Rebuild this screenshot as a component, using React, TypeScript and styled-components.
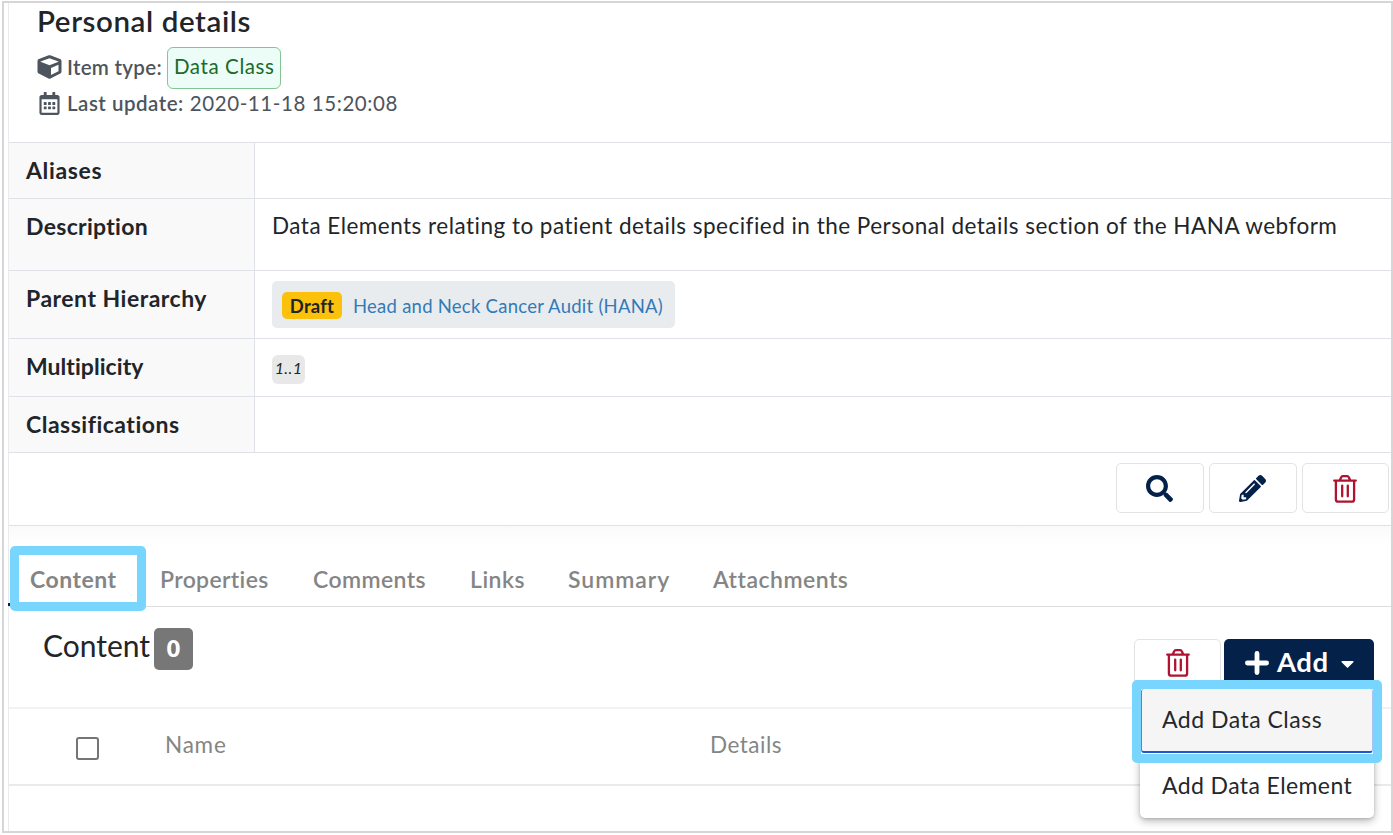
import React from "react";
import styled, { createGlobalStyle } from "styled-components";
import { FaCube, FaRegCalendarAlt, FaSearch, FaPencilAlt, FaCaretDown } from "react-icons/fa";

const Global = createGlobalStyle`
  * { box-sizing: border-box; }
  body { margin: 0; background: #fff; overflow: hidden; font-family: Lato, "Open Sans", sans-serif; font-variant-ligatures: none; color: #212529; }
`;

const Frame = styled.div`
  width: 1391px;
  height: 832px;
  margin: 1px 0 0 2px;
  padding-left: 4px;
  border: 2px solid #d6d6d6;
  background: #fff;
`;

const Panel = styled.main`
  height: 828px;
  border-left: 1px solid #e9ebee;
  display: flex;
  flex-direction: column;
`;

const Txt = styled.span<{ $size?: number; $ls?: number; $weight?: number; $color?: string }>`
  font-size: ${(p) => p.$size ?? 22.5}px;
  letter-spacing: ${(p) => p.$ls ?? 0}px;
  font-weight: ${(p) => p.$weight ?? 400};
  color: ${(p) => p.$color ?? "inherit"};
  white-space: nowrap;
`;

const Header = styled.header`
  height: 139px;
  padding-left: 28px;
  color: #4c555e;
`;

const Title = styled.h1`
  margin: 0;
  height: 43px;
  line-height: 34px;
  color: #212529;
`;

const MetaRow = styled.div<{ $height: number }>`
  display: flex;
  align-items: center;
  height: ${(p) => p.$height}px;
  svg { margin-right: 5px; width: 25px; flex: none; }
`;

const MetaValue = styled.span`
  margin-left: 6px;
`;

const TypeBadge = styled.span`
  display: flex;
  align-items: center;
  height: 42px;
  width: 114px;
  margin: 1px 0 0 5px;
  padding: 0 0 3px 6px;
  border: 1px solid #82c696;
  border-radius: 6px;
  background: #ecfcf6;
`;

const Row = styled.div<{ $height: number }>`
  display: flex;
  height: ${(p) => p.$height}px;
  border-top: 1px solid #dee2e6;
  line-height: 34px;
`;

const Label = styled.div`
  width: 246px;
  padding: 10px 0 0 17px;
  background: #f9f9f9;
  border-right: 1px solid #dee2e6;
`;

const Value = styled.div`
  flex: 1;
  padding: 10px 0 0 17px;
`;

const Parent = styled.div`
  display: flex;
  align-items: center;
  width: 403px;
  height: 47px;
  padding: 2px 0 0 10px;
  border-radius: 5px;
  background: #e9ecef;
`;

const Draft = styled.span`
  display: flex;
  align-items: center;
  justify-content: center;
  width: 60px;
  height: 27px;
  margin-right: 11px;
  border-radius: 5px;
  background: #fbc10b;
`;

const Multiplicity = styled.span`
  display: flex;
  align-items: center;
  justify-content: center;
  width: 33px;
  height: 29px;
  margin-top: 6px;
  padding-bottom: 4px;
  border-radius: 6px;
  background: #e8e8e8;
  font-style: italic;
`;

const Actions = styled.div`
  display: flex;
  justify-content: flex-end;
  gap: 5px;
  height: 74px;
  padding: 10px 2px 0 0;
  border-top: 1px solid #dee2e6;
  border-bottom: 1px solid #dee2e6;
`;

const IconButton = styled.button<{ $width: number; $raised?: boolean }>`
  display: flex;
  align-items: center;
  justify-content: center;
  width: ${(p) => p.$width}px;
  height: 50px;
  padding: ${(p) => (p.$raised ? "0 0 2px" : "1px 1px 0 0")};
  border: 1px solid #e2e3e5;
  border-radius: 5px;
  background: #fff;
  color: #04214a;
`;

const Tabs = styled.nav`
  display: flex;
  height: 81px;
  border-bottom: 1px solid #dedede;
  background: linear-gradient(#fafafa, #fff 20px);
`;

const Tab = styled.div<{ $width: number }>`
  position: relative;
  width: ${(p) => p.$width}px;
  padding-left: 21px;
  line-height: 106px;
  color: #858585;
`;

const ActiveBar = styled.div`
  position: absolute;
  left: -1px;
  bottom: 0;
  width: 130px;
  height: 3px;
  background: #04214a;
`;

const Highlight = styled.div<{ $w: number; $h: number; $x: number; $y: number }>`
  position: absolute;
  left: ${(p) => p.$x}px;
  top: ${(p) => p.$y}px;
  width: ${(p) => p.$w}px;
  height: ${(p) => p.$h}px;
  border: 9px solid #78d5fd;
  border-radius: 5px;
`;

const ContentBar = styled.section`
  display: flex;
  align-items: flex-start;
  height: 100px;
  padding: 21px 17px 0 34px;
`;

const Heading = styled.h2`
  width: 107px;
  margin: -1px 0 0;
  line-height: 36px;
  font-weight: 400;
`;

const Count = styled.span`
  display: flex;
  align-items: center;
  justify-content: center;
  width: 39px;
  height: 42px;
  margin-left: 4px;
  padding-bottom: 2px;
  border-radius: 5px;
  background: #777;
`;

const Tools = styled.div`
  position: relative;
  display: flex;
  gap: 3px;
  margin: 11px 0 0 auto;
`;

const AddButton = styled.button`
  display: flex;
  align-items: center;
  gap: 8px;
  width: 150px;
  height: 50px;
  padding: 0 0 4px 21px;
  border: 0;
  border-radius: 5px;
  background: #04214a;
  color: #fff;
  font-family: inherit;
  svg { flex: none; margin-top: 2px; }
  span { margin-bottom: 2px; }
`;

const Menu = styled.div`
  position: absolute;
  z-index: 2;
  left: 6px;
  top: 46px;
  width: 234px;
  height: 133px;
  padding-top: 4px;
  border-radius: 5px;
  background: #fff;
  box-shadow: 0 3px 8px rgba(0, 0, 0, 0.28), 0 1px 3px rgba(0, 0, 0, 0.14);
`;

const MenuItem = styled.div<{ $active?: boolean }>`
  height: ${(p) => (p.$active ? 64 : 66)}px;
  margin: 0 1px;
  padding-left: ${(p) => (p.$active ? 20 : 21)}px;
  line-height: ${(p) => (p.$active ? 60 : 64)}px;
  background: ${(p) => (p.$active ? "#f5f5f5" : "transparent")};
  border-style: solid;
  border-color: #1d56cf #a9c3f2 #1d56cf #4f83e0;
  border-width: ${(p) => (p.$active ? "0 1px 2px" : "0")};
  border-radius: 3px;
  color: #24282c;
`;

const TableHead = styled.div`
  display: flex;
  align-items: center;
  height: 79px;
  border-top: 2px solid #f2f2f3;
  border-bottom: 2px solid #e8eaed;
  color: #858585;
`;

const Checkbox = styled.span`
  width: 23px;
  height: 23px;
  margin: 3px 0 0 67px;
  border: 2px solid #757575;
  border-radius: 3px;
`;

const Column = styled.div<{ $width: number }>`
  width: ${(p) => p.$width}px;
  padding: 0 0 4px 66px;
`;

const Trash = () => (
  <svg width="24" height="28" viewBox="0 0 24 28" fill="none" stroke="#b01231" strokeWidth="2.3" strokeLinecap="round" strokeLinejoin="round">
    <path d="M1.2 5.6H22.8M2.9 5.8V24.4Q2.9 26.7 5.1 26.7H18.9Q21.1 26.7 21.1 24.4V5.8M6.8 5.2L8.2 2.3Q8.7 1.2 9.8 1.2H14.2Q15.3 1.2 15.8 2.3L17.2 5.2M9.2 10.6V21.3M14.8 10.6V21.3" />
  </svg>
);

const Plus = () => (
  <svg width="24" height="24" viewBox="0 0 24 24" stroke="#fff" strokeWidth="4.8" strokeLinecap="round">
    <path d="M12 2.4V21.6M2.4 12H21.6" />
  </svg>
);

const tabs = [
  { name: "Content", width: 130, ls: 0.5 },
  { name: "Properties", width: 153, ls: 0.35 },
  { name: "Comments", width: 157, ls: 0.4 },
  { name: "Links", width: 98, ls: 0.5 },
  { name: "Summary", width: 145, ls: 0.95 },
  { name: "Attachments", width: 180, ls: 0.5 },
];

export default function App() {
  return (
    <>
      <Global />
      <Frame>
        <Panel>
          <Header>
            <Title><Txt $size={29.5} $weight={600} $ls={0.6}>Personal details</Txt></Title>
            <MetaRow $height={42}>
              <FaCube size={24} />
              <Txt $size={20.5} $weight={600} $ls={0.3}>Item type:</Txt>
              <TypeBadge><Txt $size={20.5} $ls={0.6} $color="#176b2c">Data Class</Txt></TypeBadge>
            </MetaRow>
            <MetaRow $height={30}>
              <FaRegCalendarAlt size={23} />
              <Txt $size={20.5} $weight={600} $ls={0.5}>Last update:</Txt>
              <MetaValue><Txt $size={20.5} $ls={0.58}>2020-11-18 15:20:08</Txt></MetaValue>
            </MetaRow>
          </Header>
          <Row $height={56}>
            <Label><Txt $size={23} $weight={700} $ls={0.65}>Aliases</Txt></Label>
            <Value />
          </Row>
          <Row $height={72}>
            <Label><Txt $size={23} $weight={700} $ls={0.3}>Description</Txt></Label>
            <Value>
              <Txt $ls={0.485}>Data Elements relating to patient details specified in the Personal details section of the HANA webform</Txt>
            </Value>
          </Row>
          <Row $height={68}>
            <Label><Txt $size={23} $weight={700} $ls={0.5}>Parent Hierarchy</Txt></Label>
            <Value>
              <Parent>
                <Draft><Txt $size={18.5} $weight={700} $ls={0.2}>Draft</Txt></Draft>
                <Txt $size={18.5} $ls={0.25} $color="#337ab7">Head and Neck Cancer Audit (HANA)</Txt>
              </Parent>
            </Value>
          </Row>
          <Row $height={58}>
            <Label><Txt $size={23} $weight={700} $ls={0.05}>Multiplicity</Txt></Label>
            <Value><Multiplicity><Txt $size={16} $ls={0.4}>1..1</Txt></Multiplicity></Value>
          </Row>
          <Row $height={56}>
            <Label><Txt $size={23} $weight={700} $ls={0.5}>Classifications</Txt></Label>
            <Value />
          </Row>
          <Actions>
            <IconButton $width={88}><FaSearch size={27} /></IconButton>
            <IconButton $width={88}><FaPencilAlt size={27} /></IconButton>
            <IconButton $width={87}><Trash /></IconButton>
          </Actions>
          <Tabs>
            {tabs.map((t, i) => (
              <Tab key={t.name} $width={t.width}>
                {i === 0 && <ActiveBar />}
                <Txt $size={23} $weight={i === 0 ? 700 : 600} $ls={t.ls}>{t.name}</Txt>
                {i === 0 && <Highlight $x={1} $y={20} $w={136} $h={65} />}
              </Tab>
            ))}
          </Tabs>
          <ContentBar>
            <Heading><Txt $size={30}>Content</Txt></Heading>
            <Count><Txt $size={23} $weight={800} $color="#fff">0</Txt></Count>
            <Tools>
              <IconButton $width={87} $raised><Trash /></IconButton>
              <AddButton>
                <Plus />
                <Txt $size={27.5} $weight={700} $ls={0.5}>Add</Txt>
                <FaCaretDown size={21} />
              </AddButton>
              <Menu>
                <MenuItem $active><Txt $size={23} $ls={0.5}>Add Data Class</Txt></MenuItem>
                <MenuItem><Txt $size={23} $ls={0.4}>Add Data Element</Txt></MenuItem>
                <Highlight $x={-8} $y={-5} $w={250} $h={83} />
              </Menu>
            </Tools>
          </ContentBar>
          <TableHead>
            <Checkbox />
            <Column $width={545}><Txt $ls={0.8}>Name</Txt></Column>
            <Column $width={300}><Txt $ls={0.5}>Details</Txt></Column>
          </TableHead>
        </Panel>
      </Frame>
    </>
  );
}
